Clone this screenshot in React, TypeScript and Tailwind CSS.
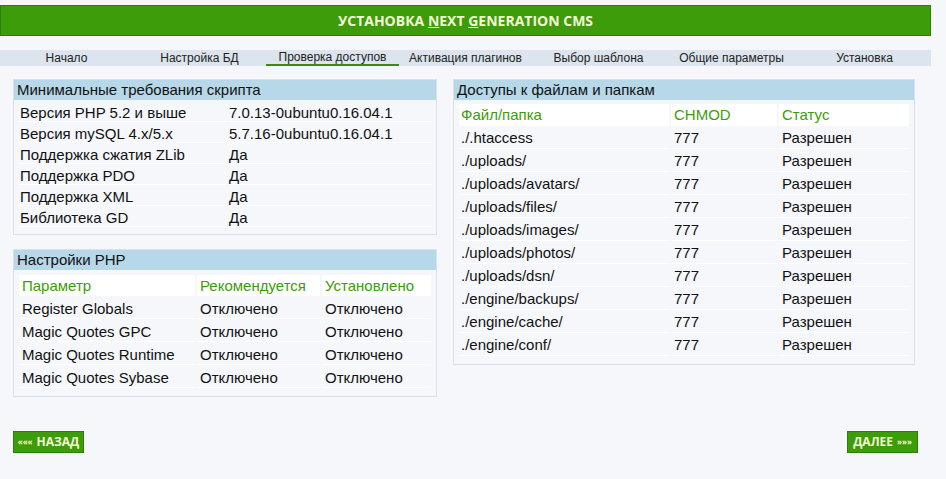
import React from 'react';

const steps = [
  'Начало',
  'Настройка БД',
  'Проверка доступов',
  'Активация плагинов',
  'Выбор шаблона',
  'Общие параметры',
  'Установка',
];

const requirements: [string, string][] = [
  ['Версия PHP 5.2 и выше', '7.0.13-0ubuntu0.16.04.1'],
  ['Версия mySQL 4.x/5.x', '5.7.16-0ubuntu0.16.04.1'],
  ['Поддержка сжатия ZLib', 'Да'],
  ['Поддержка PDO', 'Да'],
  ['Поддержка XML', 'Да'],
  ['Библиотека GD', 'Да'],
];

const phpSettings = ['Register Globals', 'Magic Quotes GPC', 'Magic Quotes Runtime', 'Magic Quotes Sybase'];

const folders = [
  './.htaccess',
  './uploads/',
  './uploads/avatars/',
  './uploads/files/',
  './uploads/images/',
  './uploads/photos/',
  './uploads/dsn/',
  './engine/backups/',
  './engine/cache/',
  './engine/conf/',
];

const Panel: React.FC<{ title: string; className?: string; children: React.ReactNode }> = ({ title, className, children }) => (
  <div className={`border border-[#d9e2ec] ${className ?? ''}`}>
    <div className="h-[20px] bg-[#b7d8e8] pl-[3px] text-[15px] leading-[20px] text-[#111]">{title}</div>
    {children}
  </div>
);

export default function App() {
  return (
    <div className="min-h-screen bg-[#f5f7fb] font-['Liberation_Sans',Arial,sans-serif] text-[#111]">
      <div className="w-[931px] pt-[5px]">
        {/* Header */}
        <div className="flex h-[31px] items-center justify-center border border-[#2f7f07] bg-[#3d9c0a] font-['Open_Sans',sans-serif] text-[14px] font-bold text-[#f2f9d4]">
          <span>
            УСТАНОВКА <span className="underline">N</span>EXT <span className="underline">G</span>ENERATION CMS
          </span>
        </div>

        {/* Steps */}
        <div className="mt-[14px] grid h-[16px] grid-cols-7 bg-[#dce4ed] text-[12px] text-[#222]">
          {steps.map((s, i) => (
            <div
              key={s}
              className={`flex items-center justify-center leading-[14px] ${i === 2 ? 'border-b-2 border-[#3d8a12]' : ''}`}
            >
              {s}
            </div>
          ))}
        </div>

        {/* Main */}
        <div className="mt-[13px] flex items-start pl-[13px]">
          <div className="flex w-[424px] flex-col gap-[14px]">
            <Panel title="Минимальные требования скрипта" className="pb-[7px]">
              <div className="mt-[1px] flex flex-col px-[4px]">
                {requirements.map(([k, v]) => (
                  <div key={k} className="flex gap-[2px] text-[15px]">
                    <div className="h-[21px] w-[208px] border-b border-white pl-[2px] leading-[24px]">{k}</div>
                    <div className="h-[21px] flex-1 border-b border-white pl-[1px] leading-[24px]">{v}</div>
                  </div>
                ))}
              </div>
            </Panel>

            <Panel title="Настройки PHP" className="pb-[8px]">
              <div className="mt-[5px] flex flex-col gap-[1px] px-[5px] text-[15px]">
                <div className="flex gap-[2px] text-[#3d9c0a]">
                  <div className="h-[21px] w-[176px] bg-white pl-[3px] leading-[22px]">Параметр</div>
                  <div className="h-[21px] w-[123px] bg-white pl-[3px] leading-[22px]">Рекомендуется</div>
                  <div className="h-[21px] flex-1 bg-white pl-[3px] leading-[22px]">Установлено</div>
                </div>
                {phpSettings.map((p) => (
                  <div key={p} className="flex gap-[2px]">
                    <div className="h-[22px] w-[176px] border-b border-white pl-[3px] leading-[23px]">{p}</div>
                    <div className="h-[22px] w-[123px] border-b border-white pl-[3px] leading-[23px]">Отключено</div>
                    <div className="h-[22px] flex-1 border-b border-white pl-[3px] leading-[23px]">Отключено</div>
                  </div>
                ))}
              </div>
            </Panel>
          </div>

          <Panel title="Доступы к файлам и папкам" className="ml-[16px] w-[462px] pb-[8px]">
            <div className="mt-[4px] flex flex-col gap-[1px] px-[5px] text-[15px]">
              <div className="flex gap-[2px] text-[#3d9c0a]">
                <div className="h-[22px] w-[210px] bg-white pl-[2px] leading-[22px]">Файл/папка</div>
                <div className="h-[22px] w-[106px] bg-white pl-[3px] leading-[22px]">CHMOD</div>
                <div className="h-[22px] flex-1 bg-white pl-[3px] leading-[22px]">Статус</div>
              </div>
              {folders.map((f) => (
                <div key={f} className="flex gap-[2px]">
                  <div className="h-[22px] w-[210px] border-b border-white pl-[2px] leading-[22px]">{f}</div>
                  <div className="h-[22px] w-[106px] border-b border-white pl-[3px] leading-[22px]">777</div>
                  <div className="h-[22px] flex-1 border-b border-white pl-[3px] leading-[22px]">Разрешен</div>
                </div>
              ))}
            </div>
          </Panel>
        </div>

        {/* Buttons */}
        <div className="mt-[34px] flex justify-between px-[13px] font-['Open_Sans',sans-serif] font-bold text-[#f2f9d4]">
          <button className="flex h-[22px] w-[71px] items-center justify-center gap-[4px] border border-[#2f7f07] bg-[#3d9c0a] text-[12px]">
            <span className="text-[8px]">«««</span>
            <span>НАЗАД</span>
          </button>
          <button className="flex h-[22px] w-[71px] items-center justify-center gap-[4px] border border-[#2f7f07] bg-[#3d9c0a] text-[12px]">
            <span>ДАЛЕЕ</span>
            <span className="text-[8px]">»»»</span>
          </button>
        </div>
      </div>
    </div>
  );
}
